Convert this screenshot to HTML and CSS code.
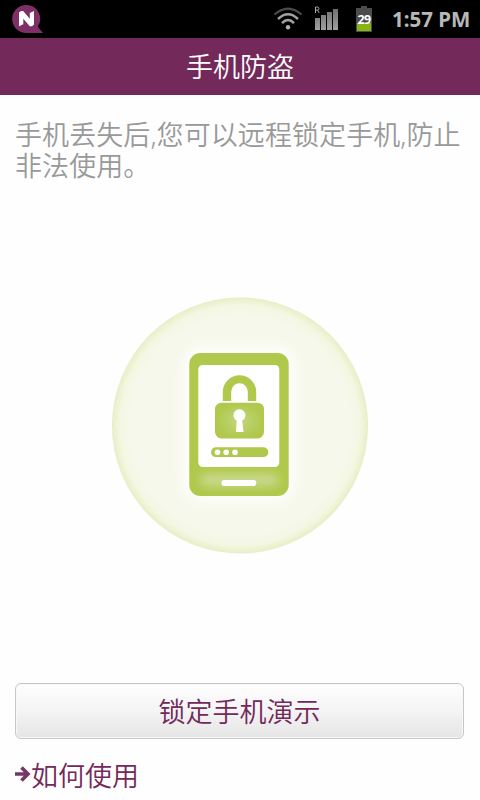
FILE: index.html
```html
<!DOCTYPE html>
<html lang="zh-CN">
<head>
<meta charset="utf-8">
<title>手机防盗</title>
<link rel="stylesheet" href="styles.css">
</head>
<body>
<div class="screen">
  <header class="status">
    <svg class="logo" width="31" height="30" viewBox="0 0 31 30">
      <path d="M14.200 1a13.700 13.700 0 0 1 11.500 21.500L31 29H14.200a14 14 0 0 1 0-28z" fill="#7d2f66"/>
      <path d="M7 8.500 9 7h2.200L17.800 14.800V9L22 7V20.500L20 22.300H17.800L11.300 14.800V20.300L7 22.300z" fill="#fff"/>
    </svg>
    <div class="indicators">
      <svg class="wifi" width="30" height="24" viewBox="0 0 30 24" fill="none">
        <path d="M1.500 7.500Q15-4 28.500 7.500" stroke="#4a4a4a" stroke-width="2.200"/>
        <path d="M5 12Q15 2.500 25 12" stroke="#a2a2a2" stroke-width="2.500"/>
        <path d="M9 16.200Q15 10 21 16.200" stroke="#a2a2a2" stroke-width="2.500"/>
        <circle cx="15" cy="20.300" r="2.200" fill="#b2b2b2"/>
      </svg>
      <svg class="signal" width="25" height="25" viewBox="0 0 25 25">
        <defs><linearGradient id="bar" x1="0" y1="0" x2="0" y2="1"><stop stop-color="#707070"/><stop offset="1" stop-color="#a0a0a0"/></linearGradient></defs>
        <path d="M.500 7V1H2.400a1.400 1.400 0 0 1 0 3.100H.500M2.400 4.100 4.200 7" fill="none" stroke="#aaa" stroke-width="1"/>
        <path d="M0 12h5v12H0zM6 9h5v15H6zM12 6h5v18h-5zM18 3h5v21h-5z" fill="url(#bar)"/>
      </svg>
      <div class="battery">
        <svg width="16" height="26" viewBox="0 0 16 26">
          <path d="M5 0h6v2h5v24H0V2h5z" fill="#4c4c4c"/>
          <path d="M1 17h14v8H1z" fill="#86b414"/>
        </svg>
        <span class="level">29</span>
      </div>
      <span class="clock">1:57 PM</span>
    </div>
  </header>
  <h1 class="title">手机防盗</h1>
  <main class="content">
    <p class="intro">手机丢失后,您可以远程锁定手机,防止非法使用。</p>
    <div class="hero">
      <svg width="272" height="272" viewBox="104 289 272 272">
        <defs>
          <radialGradient id="disc"><stop offset=".86" stop-color="#f6f8eb"/><stop offset=".94" stop-color="#f3f7e2"/><stop offset=".985" stop-color="#ebf1cd"/><stop offset="1" stop-color="#e6edc3"/></radialGradient>
          <radialGradient id="lock"><stop stop-color="#c4d57f"/><stop offset="1" stop-color="#b0c84b"/></radialGradient>
          <filter id="soft" x="-30%" y="-30%" width="160%" height="160%"><feGaussianBlur stdDeviation="7"/></filter>
          <filter id="shade" x="-50%" y="-200%" width="200%" height="500%"><feGaussianBlur stdDeviation="5"/></filter>
        </defs>
        <circle cx="240" cy="425.500" r="128" fill="url(#disc)"/>
        <rect x="184" y="348" width="110" height="153" rx="16" fill="#fff" filter="url(#soft)"/>
        <rect x="189.300" y="353" width="99.400" height="143" rx="11" fill="#b0c84b"/>
        <rect x="200" y="474" width="78" height="12" rx="5" fill="#cbd990" filter="url(#shade)"/>
        <rect x="198.300" y="365" width="81" height="102" rx="4.500" fill="#fff"/>
        <path d="M222.800 401V392a16.700 16.700 0 0 1 33.400 0v9h-8.400v-9.500a8.300 8.300 0 0 0-16.600 0V401z" fill="#b0c84b"/>
        <rect x="215" y="402.700" width="49" height="35.800" rx="6.500" fill="url(#lock)"/>
        <path d="M236.700 420.500a6 6 0 1 1 5.500 0L243.600 432h-7.700z" fill="#fff"/>
        <rect x="211" y="447.300" width="57.300" height="9.800" rx="4.900" fill="#b0c84b"/>
        <circle cx="217.500" cy="452.200" r="2.800" fill="#fff"/><circle cx="226.200" cy="452.200" r="2.800" fill="#fff"/><circle cx="235" cy="452.200" r="2.800" fill="#fff"/>
        <rect x="221.500" y="480" width="34.800" height="6" rx="2.500" fill="#fff"/>
      </svg>
    </div>
    <button class="demo" type="button">锁定手机演示</button>
    <a class="howto">
      <svg width="16" height="16" viewBox="0 0 16 16" fill="none" stroke="#793565" stroke-width="3.600"><path d="M0 8h13M6.500 1.500 13 8l-6.500 6.500"/></svg>
      <span>如何使用</span>
    </a>
  </main>
</div>
</body>
</html>
```

FILE: styles.css
```css
* { box-sizing: border-box; }

body {
  margin: 0;
  background: #fefefe;
  font-family: "Noto Sans", "Noto Sans CJK SC", sans-serif;
  font-size: 27px;
  font-weight: 350;
}

.screen {
  display: flex;
  flex-direction: column;
  width: 480px;
  height: 800px;
  overflow: hidden;
}

.status {
  display: flex;
  flex: 0 0 38px;
  justify-content: space-between;
  padding: 4px 9px 0 12px;
  background: #000;
}

.indicators { display: flex; align-items: flex-start; }
.wifi { margin: 3px 12px 0 0; }
.signal { margin: 2px 16px 0 0; }

.battery {
  position: relative;
  width: 16px;
  height: 26px;
  margin: 2px 20px 0 0;
}

.battery svg { display: block; }

.level {
  position: absolute;
  top: 6px;
  left: -2px;
  width: 20px;
  color: #fff;
  font: bold 12.5px/16px "Noto Sans", sans-serif;
  letter-spacing: -0.7px;
  text-align: center;
}

.clock {
  width: 79px;
  color: #b8b8b8;
  font: bold 20.500px/31px "Noto Sans", sans-serif;
  white-space: nowrap;
}

.title {
  flex: 0 0 57px;
  height: 57px;
  margin: 0;
  background: #73295a;
  color: #fff;
  font-size: 27px;
  font-weight: 350;
  line-height: 57px;
  text-align: center;
}

.content {
  display: flex;
  flex: 1;
  flex-direction: column;
  padding: 24px 16px 6px 15px;
}

.intro {
  margin: 0 -4px 0 0;
  color: #999;
  letter-spacing: 0.08px;
  line-height: 31px;
}

.hero {
  display: flex;
  flex: 1;
  align-items: center;
  justify-content: center;
  padding: 0 0 15px 1px;
}

.demo {
  flex: 0 0 56px;
  padding: 2px 0 0;
  border: 1px solid #c7c7c7;
  border-radius: 6px;
  background: linear-gradient(#fefefe, #f4f4f4 50%, #e5e5e5);
  box-shadow: inset 0 0 0 1px #f8f8f8;
  color: #73295a;
  font: inherit;
  line-height: 52px;
}

.howto {
  display: flex;
  align-items: center;
  margin-top: 18px;
  color: #73295a;
  line-height: 37px;
}

.howto svg { margin-top: -4px; }
```
